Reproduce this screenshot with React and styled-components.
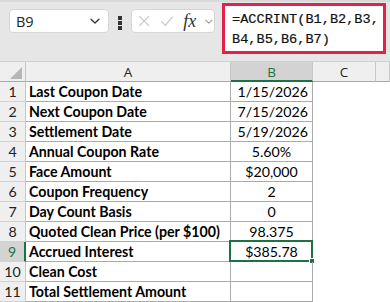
import React from 'react';
import styled, { createGlobalStyle } from 'styled-components';

const Global = createGlobalStyle`
  html, body { margin: 0; padding: 0; background: #fff; }
  * { box-sizing: border-box; }
`

const Page = styled.div`
  width: 390px;
  height: 302px;
  overflow: hidden;
  font-family: Lato, "Open Sans", sans-serif;
`

const FormulaBar = styled.div`
  height: 61px;
  background: #e6e6e6;
  border-top: 2px solid #dadada;
  display: flex;
  align-items: flex-start;
  padding-left: 9px;
`

const NameBox = styled.div`
  width: 100px;
  height: 24px;
  margin-top: 7px;
  background: #fff;
  border: 1px solid #d6d6d6;
  border-radius: 4px;
  display: flex;
  align-items: center;
  justify-content: space-between;
  padding: 0 7px 0 6px;
  font-family: "Open Sans", sans-serif;
  font-size: 14.5px;
  color: #222;
`

const Dots = styled.div`
  width: 22px;
  margin-top: 14px;
  display: flex;
  flex-direction: column;
  align-items: center;
  gap: 1.5px;
  span {
    width: 3.5px;
    height: 3.5px;
    background: #333;
  }
`

const FxBox = styled.div`
  width: 84px;
  height: 24px;
  margin-top: 7px;
  background: #fff;
  border: 1px solid #d6d6d6;
  border-radius: 4px;
  display: flex;
  align-items: center;
  padding-left: 6px;
  gap: 8px;
`

const Fx = styled.span`
  font-family: "Liberation Serif", serif;
  font-style: italic;
  font-size: 18px;
  line-height: 1;
  color: #333;
  margin-left: 1px;
`

const FormulaInput = styled.div`
  width: 164px;
  height: 51px;
  margin-top: 1px;
  margin-left: 7px;
  background: #fff;
  border: 3px solid #e3224a;
  padding: 4px 0 0 7px;
  font-family: "Liberation Mono", monospace;
  font-size: 13.6px;
  line-height: 20px;
  color: #111;
  white-space: pre;
  -webkit-text-stroke: 0.2px #111;
`

const Grid = styled.div`
  display: grid;
  grid-template-columns: 26px 205px 82px 63px 1fr;
  grid-auto-rows: 20px;
  border-top: 1px solid #d0d0d0;
  font-size: 14.2px;
  color: #000;
`

const Corner = styled.div`
  background: #efefef;
  border-right: 1px solid #c6c6c6;
  border-bottom: 1px solid #a8a8a8;
  display: flex;
  align-items: flex-end;
  justify-content: flex-end;
  padding: 0 3px 2px 0;
`

const ColHead = styled.div`
  background: ${p => (p.$active ? '#d3d3d3' : '#efefef')};
  color: ${p => (p.$active ? '#1e7145' : '#222')};
  border-right: 1px solid #c6c6c6;
  border-bottom: ${p => (p.$active ? '2px solid #1e7145' : '1px solid #a8a8a8')};
  display: flex;
  align-items: center;
  justify-content: center;
  font-family: "Open Sans", sans-serif;
  font-size: 13.5px;
  padding-top: ${p => (p.$active ? '1px' : '0')};
`

const RowHead = styled.div`
  background: ${p => (p.$active ? '#d3d3d3' : '#efefef')};
  color: ${p => (p.$active ? '#1e7145' : '#222')};
  border-right: ${p => (p.$active ? '2px solid #1e7145' : '1px solid #c6c6c6')};
  border-bottom: 1px solid #d2d2d2;
  display: flex;
  align-items: center;
  justify-content: center;
  font-size: 14.2px;
`

const Cell = styled.div`
  position: relative;
  border-right: 1px solid ${p => (p.$plain ? 'transparent' : '#ababab')};
  border-bottom: 1px solid ${p => (p.$plain ? 'transparent' : '#ababab')};
  display: flex;
  align-items: center;
  justify-content: ${p => p.$align || 'flex-start'};
  padding: 0 ${p => (p.$align === 'flex-end' ? '4px' : '3px')};
  font-weight: ${p => (p.$bold ? 700 : 400)};
  white-space: nowrap;
  overflow: visible;
`

const Selection = styled.div`
  position: absolute;
  left: -2px;
  top: -2px;
  right: -1px;
  bottom: -1px;
  border: 2px solid #1e7145;
  pointer-events: none;
`

const Handle = styled.div`
  position: absolute;
  right: -4px;
  bottom: -4px;
  width: 6px;
  height: 6px;
  background: #1e7145;
  border: 1px solid #fff;
`

const rows = [
  ['Last Coupon Date', '1/15/2026', 'flex-end'],
  ['Next Coupon Date', '7/15/2026', 'flex-end'],
  ['Settlement Date', '5/19/2026', 'flex-end'],
  ['Annual Coupon Rate', '5.60%', 'center'],
  ['Face Amount', '$20,000', 'center'],
  ['Coupon Frequency', '2', 'center'],
  ['Day Count Basis', '0', 'center'],
  ['Quoted Clean Price (per $100)', '98.375', 'center'],
  ['Accrued Interest', '$385.78', 'center'],
  ['Clean Cost', '', 'center'],
  ['Total Settlement Amount', '', 'center'],
];

const Chevron = ({ color = '#333', size = 12 }) => (
  <svg width={size} height={size} viewBox="0 0 12 12" fill="none">
    <path d="M2 4.2 L6 8 L10 4.2" stroke={color} strokeWidth="1.3" strokeLinecap="round" strokeLinejoin="round" />
  </svg>
);

export default function App() {
  return (
    <Page>
      <Global />
      <FormulaBar>
        <NameBox>
          <span>B9</span>
          <Chevron />
        </NameBox>
        <Dots><span /><span /><span /></Dots>
        <FxBox>
          <svg width="14" height="14" viewBox="0 0 14 14">
            <path d="M1.5 1.5 L12.5 12.5 M12.5 1.5 L1.5 12.5" stroke="#c4c4c4" strokeWidth="1.3" />
          </svg>
          <svg width="16" height="14" viewBox="0 0 16 14" style={{ marginLeft: 2 }}>
            <path d="M1.5 7.5 L6 12 L14.5 2" stroke="#c4c4c4" strokeWidth="1.3" fill="none" />
          </svg>
          <Fx>fx</Fx>
          <Chevron color="#999" size={11} />
        </FxBox>
        <FormulaInput>{'=ACCRINT(B1,B2,B3,\nB4,B5,B6,B7)'}</FormulaInput>
      </FormulaBar>
      <Grid>
        <Corner>
          <svg width="12" height="12" viewBox="0 0 12 12">
            <path d="M12 0 L12 12 L0 12 Z" fill="#b6b6b6" />
          </svg>
        </Corner>
        <ColHead>A</ColHead>
        <ColHead $active>B</ColHead>
        <ColHead>C</ColHead>
        <ColHead />
        {rows.map(([label, value, align], i) => {
          const n = i + 1;
          const active = n === 9;
          return (
            <React.Fragment key={n}>
              <RowHead $active={active}>{n}</RowHead>
              <Cell $bold>{label}</Cell>
              <Cell $align={align}>
                {value}
                {active && (
                  <Selection>
                    <Handle />
                  </Selection>
                )}
              </Cell>
              <Cell $plain />
              <Cell $plain />
            </React.Fragment>
          );
        })}
        <RowHead />
        <Cell $plain />
        <Cell $plain />
        <Cell $plain />
        <Cell $plain />
      </Grid>
    </Page>
  );
}
